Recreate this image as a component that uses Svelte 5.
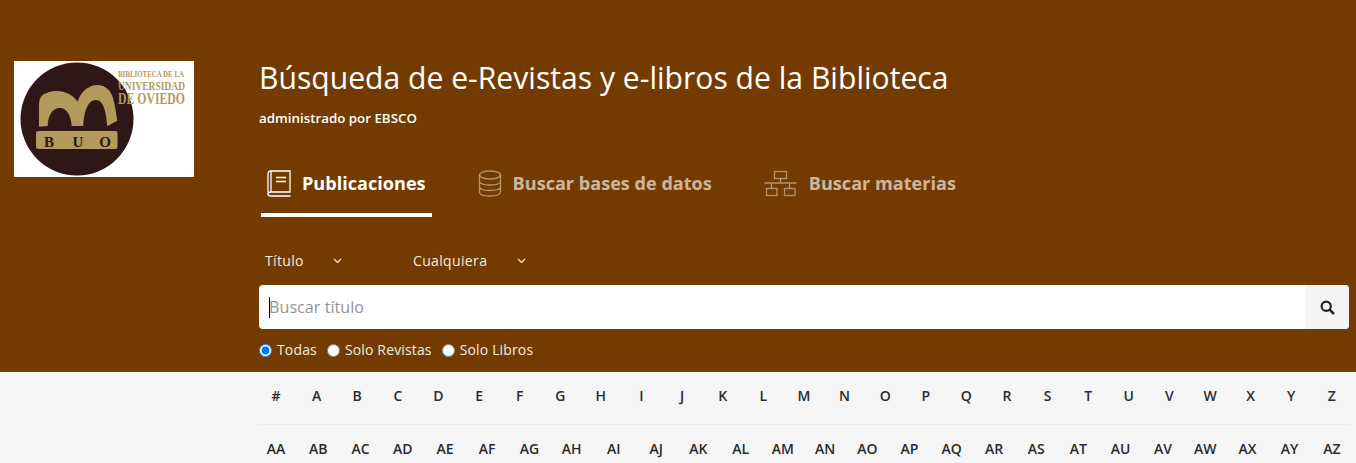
<script>
    const tabs = [
        { label: 'Publicaciones', icon: 'book', active: true },
        { label: 'Buscar bases de datos', icon: 'db' },
        { label: 'Buscar materias', icon: 'tree' }
    ];
    const single = '#ABCDEFGHIJKLMNOPQRSTUVWXYZ'.split('');
    const double = 'ABCDEFGHIJKLMNOPQRSTUVWXYZ'.split('').map((c) => 'A' + c);
    let scope = $state('all');
</script>

<div class="page">
    <header class="hero">
        <div class="brand">
            <svg class="logo" width="180" height="116" viewBox="0 0 180 116">
                <rect width="180" height="116" fill="#fff"/>
                <circle cx="63" cy="58" r="56.5" fill="#2f1718"/>
                <path d="M25 65.7 V44 C25 37 28 33 33 32 C42 28 56 30 63.7 40.7 C66 32 74 24 83 24 C92 24 97 30 99 37 C101 44 102 52 103.3 59.7 L97 63 L94 65 H93.3 C92 52 90 39 82 39 C74 39 70 50 69.3 65 H57.7 C57 55 53 47 46 47 C38 47 34 55 33.7 65 Z" fill="#b29a5c"/>
                <rect x="22" y="70" width="81.5" height="18" rx="2" fill="#b29a5c"/>
                <text class="buo" x="35" y="85.7">B</text>
                <text class="buo" x="64" y="85.7">U</text>
                <text class="buo" x="91" y="85.7">O</text>
                <text class="lg s" x="104" y="16" textLength="66" lengthAdjust="spacingAndGlyphs">BIBLIOTECA DE LA</text>
                <text class="lg m" x="104" y="29" textLength="67" lengthAdjust="spacingAndGlyphs">UNIVERSIDAD</text>
                <text class="lg l" x="104" y="43" textLength="67" lengthAdjust="spacingAndGlyphs">DE OVIEDO</text>
            </svg>
        </div>
        <div class="main">
            <h1>Búsqueda de e-Revistas y e-libros de la Biblioteca</h1>
            <p class="sub">administrado por EBSCO</p>
            <nav class="tabs">
                {#each tabs as tab}
                    <div class="tab" class:active={tab.active}>
                        {#if tab.icon === 'book'}
                            <svg width="24" height="27" viewBox="0 0 24 27" fill="none" stroke="currentColor" stroke-width="1.3">
                                <path d="M1 23 V4 C1 2 2 1 4 1 H23 V22 H4 C2 22 1 23 1 24 C1 25 2 26 4 26 H23 V25.5 M4 22 V1"/>
                                <path d="M9 7.5 H19 M9 11.5 H19" stroke-width="1.5"/>
                            </svg>
                        {:else if tab.icon === 'db'}
                            <svg width="24" height="27" viewBox="0 0 24 27" fill="none" stroke="currentColor" stroke-width="1.3">
                                <ellipse cx="12" cy="5" rx="10.5" ry="4"/>
                                <path d="M1.5 5 V22 C1.5 24.5 6 26 12 26 C18 26 22.5 24.5 22.5 22 V5 M1.5 11 C1.5 13.5 6 15 12 15 C18 15 22.5 13.5 22.5 11 M1.5 16.5 C1.5 19 6 20.5 12 20.5 C18 20.5 22.5 19 22.5 16.5"/>
                            </svg>
                        {:else}
                            <svg width="34" height="27" viewBox="0 0 34 27" fill="none" stroke="currentColor" stroke-width="1.3">
                                <rect x="10.5" y="1.5" width="12" height="7"/>
                                <rect x="2.5" y="18.5" width="10.5" height="7"/>
                                <rect x="20.5" y="18.5" width="10.5" height="7"/>
                                <path d="M16.5 8.5 V13 M0.5 13 H32.5 M7.5 13 V18.5 M25.5 13 V18.5"/>
                            </svg>
                        {/if}
                        <span>{tab.label}</span>
                    </div>
                {/each}
            </nav>
            <div class="filters">
                <div class="select first">
                    <span>Título</span>
                    <svg width="9" height="6" viewBox="0 0 9 6" fill="none" stroke="currentColor" stroke-width="1.2"><path d="M1 1 L4.5 4.5 L8 1"/></svg>
                </div>
                <div class="select second">
                    <span>Cualquiera</span>
                    <svg width="9" height="6" viewBox="0 0 9 6" fill="none" stroke="currentColor" stroke-width="1.2"><path d="M1 1 L4.5 4.5 L8 1"/></svg>
                </div>
            </div>
            <div class="search">
                <div class="field"><i class="caret"></i><span>Buscar título</span></div>
                <button class="go" aria-label="Buscar">
                    <svg width="15" height="15" viewBox="0 0 15 15" fill="none" stroke="#212529" stroke-width="2.2">
                        <circle cx="6.2" cy="6.2" r="4.6"/>
                        <path d="M9.6 9.6 L14 14" stroke-width="2.6"/>
                    </svg>
                </button>
            </div>
            <div class="radios">
                <label><input type="radio" bind:group={scope} value="all"/>Todas</label>
                <label><input type="radio" bind:group={scope} value="journals"/>Solo Revistas</label>
                <label><input type="radio" bind:group={scope} value="books"/>Solo Libros</label>
            </div>
        </div>
    </header>
    <section class="alpha">
        <div class="row first-row">
            {#each single as c}<span>{c}</span>{/each}
        </div>
        <div class="row second-row">
            {#each double as c}<span>{c}</span>{/each}
        </div>
    </section>
</div>

<style>
    :global(body) {
        margin: 0;
        background: #f5f5f5;
        font-family: "Open Sans", sans-serif;
    }

    .page {
        height: 463px;
        overflow: hidden;
    }

    .hero {
        display: flex;
        height: 372px;
        background: #733b00;
        color: #fff;
        box-sizing: border-box;
        padding-top: 61px;
    }

    .brand {
        width: 259px;
        padding-left: 14px;
        box-sizing: border-box;
    }

    .logo {
        display: block;
    }

    .buo {
        font: bold 15px "Liberation Serif", serif;
        fill: #2f1718;
        text-anchor: middle;
    }

    .lg {
        font-family: "Liberation Serif", serif;
        font-weight: bold;
        fill: #b29a5c;
    }

    .s {
        font-size: 7.5px;
    }

    .m {
        font-size: 13.5px;
    }

    .l {
        font-size: 16.5px;
    }

    .main {
        width: 1090px;
    }

    h1 {
        margin: 0;
        font-size: 30.12px;
        font-weight: 400;
        line-height: 34px;
    }

    .sub {
        margin: 14px 0 0;
        font-size: 13.33px;
        font-weight: 600;
        line-height: 18px;
    }

    .tabs {
        display: flex;
        margin: 35px 0 0 2px;
        gap: 40px;
    }

    .tab {
        display: flex;
        align-items: center;
        gap: 11px;
        height: 55px;
        padding: 0 6px 9px;
        box-sizing: border-box;
        font-size: 18.1px;
        font-weight: 700;
        color: rgba(255, 255, 255, 0.65);
        border-bottom: 4px solid transparent;
    }

    .tab svg {
        opacity: 0.7;
    }

    .tab.active {
        color: #fff;
        border-bottom-color: #fff;
    }

    .tab.active svg {
        opacity: 1;
    }

    .filters {
        display: flex;
        margin-top: 32px;
        height: 22px;
        align-items: center;
        font-size: 14px;
        color: #f4ebe2;
        letter-spacing: 0.35px;
    }

    .select {
        display: flex;
        align-items: center;
        justify-content: space-between;
        padding-left: 6px;
        box-sizing: border-box;
    }

    .select svg {
        margin-top: 2px;
    }

    .first {
        width: 83px;
    }

    .second {
        width: 119px;
        margin-left: 65px;
    }

    .search {
        display: flex;
        height: 44px;
        margin-top: 14px;
        background: #fff;
        border-radius: 4px;
        overflow: hidden;
    }

    .field {
        flex: 1;
        display: flex;
        align-items: center;
        padding-left: 10px;
        font-size: 16.2px;
        color: #949494;
    }

    .caret {
        width: 1px;
        height: 21px;
        background: #000;
        margin-right: -1px;
    }

    .go {
        width: 44px;
        border: 0;
        padding: 0;
        background: #f4f4f4;
        display: flex;
        align-items: center;
        justify-content: center;
    }

    .radios {
        display: flex;
        gap: 10px;
        margin-top: 12px;
        font-size: 14px;
        line-height: 18px;
        letter-spacing: 0.15px;
        color: #f4ebe2;
    }

    .radios label {
        display: flex;
        align-items: center;
    }

    .radios input {
        width: 13px;
        height: 13px;
        margin: 0 5px 0 0;
    }

    .alpha {
        margin-left: 259px;
        width: 1090px;
    }

    .row {
        display: flex;
        justify-content: space-between;
        align-items: center;
        box-sizing: border-box;
        font-size: 14px;
        font-weight: 600;
        color: #2b2b2b;
    }

    .row span {
        width: 34px;
        text-align: center;
    }

    .first-row {
        height: 53px;
        padding-bottom: 5px;
        border-bottom: 1px solid #ebebeb;
    }

    .second-row {
        height: 46px;
    }
</style>
